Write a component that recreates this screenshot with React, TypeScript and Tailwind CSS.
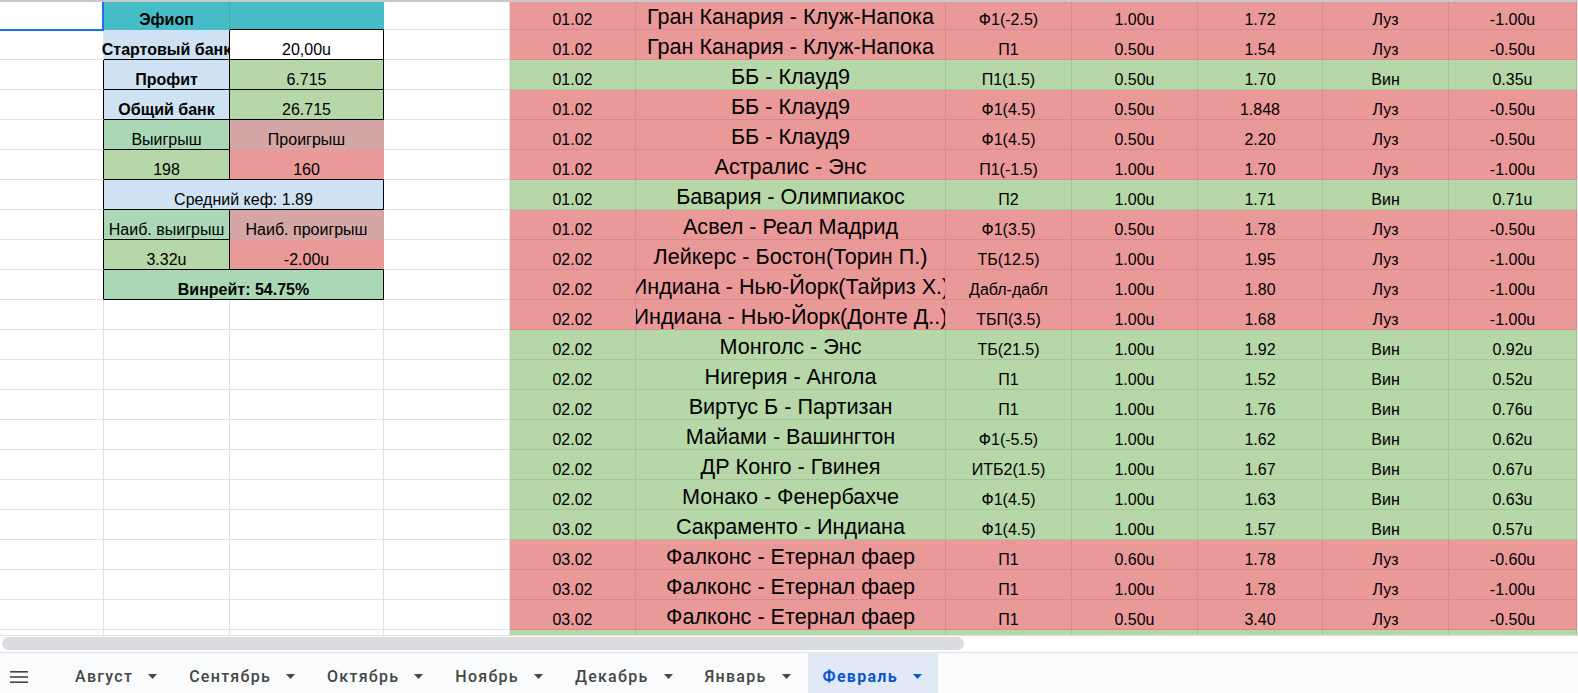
import React from "react";

type Row = { d: string; m: string; b: string; s: string; k: string; r: string; p: string; w: boolean };

const rows: Row[] = [
  { d: "01.02", m: "Гран Канария - Клуж-Напока", b: "Ф1(-2.5)", s: "1.00u", k: "1.72", r: "Луз", p: "-1.00u", w: false },
  { d: "01.02", m: "Гран Канария - Клуж-Напока", b: "П1", s: "0.50u", k: "1.54", r: "Луз", p: "-0.50u", w: false },
  { d: "01.02", m: "ББ - Клауд9", b: "П1(1.5)", s: "0.50u", k: "1.70", r: "Вин", p: "0.35u", w: true },
  { d: "01.02", m: "ББ - Клауд9", b: "Ф1(4.5)", s: "0.50u", k: "1.848", r: "Луз", p: "-0.50u", w: false },
  { d: "01.02", m: "ББ - Клауд9", b: "Ф1(4.5)", s: "0.50u", k: "2.20", r: "Луз", p: "-0.50u", w: false },
  { d: "01.02", m: "Астралис - Энс", b: "П1(-1.5)", s: "1.00u", k: "1.70", r: "Луз", p: "-1.00u", w: false },
  { d: "01.02", m: "Бавария - Олимпиакос", b: "П2", s: "1.00u", k: "1.71", r: "Вин", p: "0.71u", w: true },
  { d: "01.02", m: "Асвел - Реал Мадрид", b: "Ф1(3.5)", s: "0.50u", k: "1.78", r: "Луз", p: "-0.50u", w: false },
  { d: "02.02", m: "Лейкерс - Бостон(Торин П.)", b: "ТБ(12.5)", s: "1.00u", k: "1.95", r: "Луз", p: "-1.00u", w: false },
  { d: "02.02", m: "Индиана - Нью-Йорк(Тайриз Х.)", b: "Дабл-дабл", s: "1.00u", k: "1.80", r: "Луз", p: "-1.00u", w: false },
  { d: "02.02", m: "Индиана - Нью-Йорк(Донте Д..)", b: "ТБП(3.5)", s: "1.00u", k: "1.68", r: "Луз", p: "-1.00u", w: false },
  { d: "02.02", m: "Монголс - Энс", b: "ТБ(21.5)", s: "1.00u", k: "1.92", r: "Вин", p: "0.92u", w: true },
  { d: "02.02", m: "Нигерия - Ангола", b: "П1", s: "1.00u", k: "1.52", r: "Вин", p: "0.52u", w: true },
  { d: "02.02", m: "Виртус Б - Партизан", b: "П1", s: "1.00u", k: "1.76", r: "Вин", p: "0.76u", w: true },
  { d: "02.02", m: "Майами - Вашингтон", b: "Ф1(-5.5)", s: "1.00u", k: "1.62", r: "Вин", p: "0.62u", w: true },
  { d: "02.02", m: "ДР Конго - Гвинея", b: "ИТБ2(1.5)", s: "1.00u", k: "1.67", r: "Вин", p: "0.67u", w: true },
  { d: "02.02", m: "Монако - Фенербахче", b: "Ф1(4.5)", s: "1.00u", k: "1.63", r: "Вин", p: "0.63u", w: true },
  { d: "03.02", m: "Сакраменто - Индиана", b: "Ф1(4.5)", s: "1.00u", k: "1.57", r: "Вин", p: "0.57u", w: true },
  { d: "03.02", m: "Фалконс - Етернал фаер", b: "П1", s: "0.60u", k: "1.78", r: "Луз", p: "-0.60u", w: false },
  { d: "03.02", m: "Фалконс - Етернал фаер", b: "П1", s: "1.00u", k: "1.78", r: "Луз", p: "-1.00u", w: false },
  { d: "03.02", m: "Фалконс - Етернал фаер", b: "П1", s: "0.50u", k: "3.40", r: "Луз", p: "-0.50u", w: false },
];

const BASE = "flex items-end justify-center whitespace-nowrap border-r border-b text-[16px] leading-[18px]";
const CLIP = " overflow-hidden";
const PLAIN = BASE + CLIP + " bg-white border-[#e1e1e1]";
const BLK = " border-r-black border-b-black";
const MATCH = " text-[21.6px] leading-[24px]";

function C({ cls, children, span }: { cls: string; children?: React.ReactNode; span?: boolean }) {
  return <div className={cls + (span ? " col-span-2" : "")}>{children}</div>;
}

function leftCells(i: number): React.ReactNode[] {
  const a = i >= 2 && i <= 9 ? BASE + CLIP + " bg-white border-b-[#e1e1e1] border-r-black" : PLAIN;
  const out: React.ReactNode[] = [<C key="a" cls={a} />];
  switch (i) {
    case 0:
      out.push(<C key="b" cls={BASE + CLIP + " bg-[#46bdc6] font-bold border-r-[#3eaab3] border-b-[#46bdc6]"}>Эфиоп</C>);
      out.push(<C key="c" cls={BASE + CLIP + " bg-[#46bdc6] border-r-[#46bdc6] border-b-black"} />);
      break;
    case 1:
      out.push(<C key="b" cls={BASE + " overflow-visible bg-[#cfe2f3] font-bold" + BLK}>Стартовый банк</C>);
      out.push(<C key="c" cls={BASE + CLIP + " bg-white" + BLK}>20,00u</C>);
      break;
    case 2:
      out.push(<C key="b" cls={BASE + CLIP + " bg-[#cfe2f3] font-bold" + BLK}>Профит</C>);
      out.push(<C key="c" cls={BASE + CLIP + " bg-[#b6d7a8]" + BLK}>6.715</C>);
      break;
    case 3:
      out.push(<C key="b" cls={BASE + CLIP + " bg-[#cfe2f3] font-bold" + BLK}>Общий банк</C>);
      out.push(<C key="c" cls={BASE + CLIP + " bg-[#b6d7a8]" + BLK}>26.715</C>);
      break;
    case 4:
      out.push(<C key="b" cls={BASE + CLIP + " bg-[#aad8b7]" + BLK}>Выигрыш</C>);
      out.push(<C key="c" cls={BASE + CLIP + " bg-[#d5a6a6] border-r-[#d5a6a6] border-b-[#d5a6a6]"}>Проигрыш</C>);
      break;
    case 5:
      out.push(<C key="b" cls={BASE + CLIP + " bg-[#b6d7a8]" + BLK}>198</C>);
      out.push(<C key="c" cls={BASE + CLIP + " bg-[#ea9999] border-r-[#ea9999] border-b-black"}>160</C>);
      break;
    case 6:
      out.push(<C key="b" span cls={BASE + CLIP + " bg-[#cfe2f3]" + BLK}>Средний кеф: 1.89</C>);
      break;
    case 7:
      out.push(<C key="b" cls={BASE + CLIP + " bg-[#aad8b7]" + BLK}>Наиб. выигрыш</C>);
      out.push(<C key="c" cls={BASE + CLIP + " bg-[#d5a6a6] border-r-[#d5a6a6] border-b-[#d5a6a6]"}>Наиб. проигрыш</C>);
      break;
    case 8:
      out.push(<C key="b" cls={BASE + CLIP + " bg-[#b6d7a8]" + BLK}>3.32u</C>);
      out.push(<C key="c" cls={BASE + CLIP + " bg-[#ea9999] border-r-[#ea9999] border-b-black"}>-2.00u</C>);
      break;
    case 9:
      out.push(<C key="b" span cls={BASE + CLIP + " bg-[#aad8b7] font-bold" + BLK}>Винрейт: 54.75%</C>);
      break;
    default:
      out.push(<C key="b" cls={PLAIN} />);
      out.push(<C key="c" cls={PLAIN} />);
  }
  out.push(<C key="d" cls={PLAIN} />);
  return out;
}

function rightCells(i: number): React.ReactNode[] {
  const r = rows[i];
  const win = r ? r.w : true;
  const col = win ? " bg-[#b6d7a8] border-[#a5c598]" : " bg-[#ea9999] border-[#d68c8c]";
  const cls = BASE + CLIP + col;
  return [
    <C key="e" cls={cls}>{r?.d}</C>,
    <C key="f" cls={cls + MATCH}>{r?.m}</C>,
    <C key="g" cls={cls}>{r?.b}</C>,
    <C key="h" cls={cls}>{r?.s}</C>,
    <C key="i" cls={cls}>{r?.k}</C>,
    <C key="j" cls={cls}>{r?.r}</C>,
    <C key="k" cls={cls}>{r?.p}</C>,
    <C key="l" cls="bg-[#e8eaed]" />,
  ];
}

function Arrow({ active }: { active?: boolean }) {
  return (
    <svg width="9" height="5" viewBox="0 0 9 5" className="shrink-0">
      <path d="M0 0 L9 0 L4.5 5 Z" fill={active ? "#0b57d0" : "#444746"} />
    </svg>
  );
}

const tabs = ["Август", "Сентябрь", "Октябрь", "Ноябрь", "Декабрь", "Январь", "Февраль"];

export default function App() {
  const idx = Array.from({ length: 22 }, (_, i) => i);
  return (
    <div className="w-[1578px] h-[693px] overflow-hidden bg-white flex flex-col font-['Liberation_Sans',Arial,sans-serif] text-black">
      <div className="h-[2px] shrink-0 bg-[#c7c9cc]" />
      <div className="relative h-[633px] shrink-0 overflow-hidden">
        <div className="grid grid-cols-[104px_126px_154px_126px_126px_310px_126px_126px_125px_126px_128px_1fr] grid-rows-[28px_repeat(21,30px)]">
          {idx.map((i) => (
            <React.Fragment key={i}>
              {leftCells(i)}
              {rightCells(i)}
            </React.Fragment>
          ))}
        </div>
        <div className="absolute left-[-2px] top-[-2px] w-[106px] h-[31px] border-r-2 border-b-2 border-[#1a73e8]" />
      </div>
      <div className="h-[17px] shrink-0 border-t border-[#e1e3e1] bg-white">
        <div className="ml-[2px] mt-[1px] h-[13px] w-[962px] rounded-full bg-[#dadce0]" />
      </div>
      <div className="h-[41px] shrink-0 border-t border-[#e1e3e1] bg-[#f9fbfd] flex font-['Roboto',sans-serif] text-[16px] text-[#444746]">
        <div className="flex items-center pt-[7px] ml-[10px] w-[18px]">
          <svg width="18" height="12" viewBox="0 0 18 12">
            <rect x="0" y="0" width="18" height="1.6" fill="#444746" />
            <rect x="0" y="5.2" width="18" height="1.6" fill="#444746" />
            <rect x="0" y="10.4" width="18" height="1.6" fill="#444746" />
          </svg>
        </div>
        <div className="flex ml-[32px] h-full">
          {tabs.map((t) => {
            const active = t === "Февраль";
            return (
              <div
                key={t}
                className={
                  active
                    ? "flex items-center h-full pt-[7px] pl-[15px] pr-[16px] gap-[15px] bg-[#e1e9f7] text-[#0b57d0] font-bold tracking-[0.08em]"
                    : "flex items-center h-full pt-[7px] pl-[15px] pr-[17px] gap-[15px] font-medium tracking-[0.08em]"
                }
              >
                <span className="leading-none">{t}</span>
                <Arrow active={active} />
              </div>
            );
          })}
        </div>
      </div>
    </div>
  );
}
